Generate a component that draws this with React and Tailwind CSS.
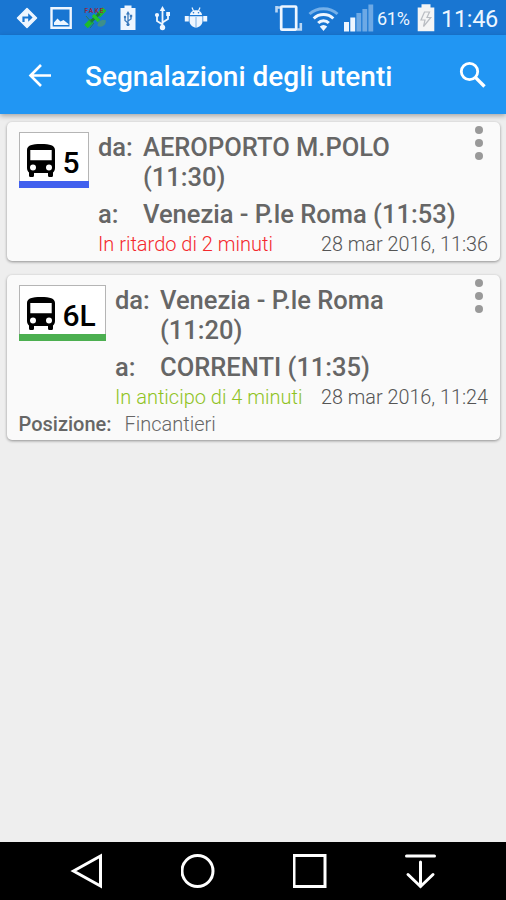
import clsx from 'clsx';

const reports = [
  {
    id: 1,
    line: '5',
    lineColor: 'bg-[#4160ee]',
    badgeWidth: 'w-[70px]',
    from: ['AEROPORTO M.POLO', '(11:30)'],
    to: 'Venezia - P.le Roma (11:53)',
    status: 'In ritardo di 2 minuti',
    statusColor: 'text-[#f4282d]',
    date: '28 mar 2016, 11:36',
  },
  {
    id: 2,
    line: '6L',
    lineColor: 'bg-[#4caf50]',
    badgeWidth: 'w-[87px]',
    from: ['Venezia - P.le Roma', '(11:20)'],
    to: 'CORRENTI (11:35)',
    status: 'In anticipo di 4 minuti',
    statusColor: 'text-[#8fc31f]',
    date: '28 mar 2016, 11:24',
    position: 'Fincantieri',
  },
];

function StatusBar() {
  return (
    <div className="flex h-[35px] shrink-0 items-center bg-[#1976d2] pl-4 pr-[9px] text-[#eef6ff]">
      {/* Notifications */}
      <svg className="h-[35px] w-[22px]" viewBox="0 0 22 35" fill="none">
        <path d="M11 8.5 20.5 18 11 27.5 1.5 18Z" fill="currentColor" stroke="currentColor" strokeWidth="1.5" strokeLinejoin="round" />
        <path d="M7.5 22V17.5H13.5" stroke="#1976d2" strokeWidth="2.2" />
        <path d="M12.2 13.2 16.6 17.5 12.2 21.8Z" fill="#1976d2" />
      </svg>
      <svg className="ml-[12px] h-[35px] w-[23px]" viewBox="0 0 23 35" fill="none">
        <path d="M1.5 8.3H20.7V27.7H1.5Z" stroke="currentColor" strokeWidth="2.4" />
        <path d="M4 25V22.5L7.5 18.5 10.5 21.5 13.5 20 18.5 24V25Z" fill="currentColor" />
      </svg>
      <svg className="ml-[11px] h-[35px] w-[24px]" viewBox="0 0 24 35" fill="none">
        <path d="M2 26.5 8 20.5M14.5 15.5 20.5 9" stroke="#1dbb2c" strokeWidth="5" />
        <path d="M7 21.5 15.5 13.5" stroke="#187e38" strokeWidth="3" />
        <path d="M9 15 15 21" stroke="#22c529" strokeWidth="3.5" />
        <path d="M13.5 26C13.5 21.5 17 19 22 20.5 22 25 18 28 13.5 26Z" fill="#3e8f8a" />
        <path d="M2 16 8 23M6 28 10 23" stroke="#267d58" strokeWidth="1" />
        <text x="0.5" y="13" fill="#8f2a45" fontFamily="Roboto, sans-serif" fontSize="6.5" fontWeight="700" textLength="19">FAKE</text>
      </svg>
      <svg className="ml-[11px] h-[35px] w-[18px]" viewBox="0 0 18 35" fill="none">
        <path d="M5.5 5.5H12.5V8H16.5V30H1.5V8H5.5Z" fill="currentColor" />
        <path d="M9 13V26M9 23 6 20.5V17M9 21 12 19V16" stroke="#3979bc" strokeWidth="1.3" />
        <circle cx="9" cy="24.5" r="1.6" fill="#3979bc" />
        <path d="M9 11 11 14.5H7ZM10.8 14.8H13.2V17.2H10.8Z" fill="#3979bc" />
        <circle cx="6" cy="17" r="1.2" fill="#3979bc" />
      </svg>
      <svg className="ml-[17px] h-[35px] w-[18px]" viewBox="0 0 18 35" fill="none">
        <path d="M8.5 10V28M8.5 24.5 3 21V15.5M8.5 22.5 14 19V14" stroke="currentColor" strokeWidth="1.8" />
        <path d="M8.5 6 11.3 11H5.7ZM12.2 12H16V16H12.2Z" fill="currentColor" />
        <circle cx="3" cy="15" r="2.1" fill="currentColor" />
        <circle cx="8.5" cy="27.5" r="2.7" fill="currentColor" />
      </svg>
      <svg className="ml-[12px] h-[35px] w-[24px]" viewBox="0 0 24 35" fill="none">
        <path d="M6 15C6 8.5 18 8.5 18 15ZM5.5 16.2H18.5V21C18.5 25 15 27.5 12 27.5S5.5 25 5.5 21Z" fill="currentColor" />
        <path d="M8 7.5 9.5 11M16 7.5 14.5 11" stroke="currentColor" strokeWidth="1.2" />
        <path d="M0.8 16H4.8V21.5H0.8ZM19.2 16H23.2V21.5H19.2Z" fill="currentColor" />
        <path d="M12 17V27" stroke="#6ba6e0" strokeWidth="0.9" />
        <circle cx="9.5" cy="12.8" r="0.8" fill="#1976d2" />
        <circle cx="14.5" cy="12.8" r="0.8" fill="#1976d2" />
      </svg>

      {/* System icons */}
      <svg className="ml-auto h-[35px] w-[30px]" viewBox="0 0 30 35" fill="none">
        <rect x="7.2" y="6.5" width="15" height="23.2" rx="0.8" stroke="currentColor" strokeWidth="2.7" />
        <path d="M2.5 6V12.5M2 7.5H6M26.8 23V29.5H23" stroke="#b9d6f4" strokeWidth="2.6" />
      </svg>
      <svg className="ml-1 h-[35px] w-[31px]" viewBox="0 0 31 35" fill="none" strokeWidth="3">
        <path d="M1.5 14C9 7 22 7 29.5 14" stroke="#75b0e9" />
        <path d="M5.7 18.5C11 13.3 20 13.3 25.3 18.5M10.2 23C13 20 18 20 20.8 23" stroke="currentColor" />
        <path d="M11.8 26.5Q15.5 23.5 19.2 26.5L15.5 31Z" fill="currentColor" />
      </svg>
      <svg className="ml-[5px] h-[35px] w-[30px]" viewBox="0 0 30 35">
        <path d="M0 22H5V31.5H0ZM6.3 17.5H11.2V31.5H6.3Z" fill="currentColor" />
        <path d="M12.4 13H17.2V31.5H12.4ZM18.4 9H23.2V31.5H18.4ZM24.4 4.5H29.2V31.5H24.4Z" fill="#6da9e5" />
      </svg>
      <span className="ml-[3px] w-[35px] whitespace-nowrap pt-[3px] text-[18px] leading-none tracking-[-0.3px]">61%</span>
      <svg className="ml-[5px] h-[35px] w-[18px]" viewBox="0 0 18 35" fill="none">
        <path d="M4.5 4.2H13.5V7.5H17.3V31.3H0.7V7.5H4.5Z" fill="#f4f5f5" />
        <path d="M7.5 12 4 20H8L6.5 26.5 13.8 17.5H10L12.5 12Z" stroke="#b9bdc2" strokeWidth="1.2" />
      </svg>
      <span className="ml-[6px] w-[56px] whitespace-nowrap pt-[4px] text-[23.5px] leading-none tracking-[-0.3px]">11:46</span>
    </div>
  );
}

function AppBar() {
  return (
    <header className="relative flex h-[79px] shrink-0 items-center bg-[#2196f3] pl-[27px] pr-[19px] text-white shadow-[0_2px_5px_rgba(0,0,0,0.3)]">
      <button aria-label="Indietro">
        <svg className="h-[26px] w-[26px]" viewBox="0 0 26 26" fill="none" stroke="currentColor" strokeWidth="2.6">
          <path d="M24 13.5H3.5M14 3 3.5 13.5 14 24" />
        </svg>
      </button>
      <h1 className="ml-8 whitespace-nowrap pt-[5px] text-[28px] font-medium leading-8">Segnalazioni degli utenti</h1>
      <button className="ml-auto" aria-label="Cerca">
        <svg className="h-[28px] w-[28px]" viewBox="0 0 28 28" fill="none" stroke="currentColor">
          <circle cx="10.5" cy="10.5" r="8.2" strokeWidth="2.8" />
          <path d="M16.4 16.4 25.5 25.5" strokeWidth="3.4" />
        </svg>
      </button>
    </header>
  );
}

function LineBadge({ line, color, width }) {
  return (
    <div className={clsx('flex h-[56px] shrink-0 flex-col border border-b-0 border-[#b5b5b5] bg-white text-black', width)}>
      <div className="flex flex-1 items-start pl-[6px] pt-[10px]">
        <svg className="h-[34px] w-[30px] shrink-0" viewBox="0 0 30 34">
          <path
            fillRule="evenodd"
            d="M1 7C1 2.5 6 1 15 1S29 2.5 29 7V25C29 27 28 28.5 27 29.5V32.5C27 35 22 35 22 32.5V30H8V32.5C8 35 3 35 3 32.5V29.5C2 28.5 1 27 1 25ZM4.3 7V17.3H25.7V7ZM7 21.5A3 3 0 1 0 7 27.5 3 3 0 1 0 7 21.5ZM23 21.5A3 3 0 1 0 23 27.5 3 3 0 1 0 23 21.5Z"
          />
        </svg>
        <span className="ml-[7px] mt-[3px] text-[30px] font-medium leading-[34px]">{line}</span>
      </div>
      <div className={clsx('-mx-px h-[7px]', color)} />
    </div>
  );
}

function ReportCard({ report }) {
  return (
    <article
      className={clsx(
        'flex flex-col rounded-[5px] bg-[#fafafa] pl-[11.5px] pr-[12px] pt-[10px] shadow-[0_1px_3px_rgba(0,0,0,0.4)]',
        report.position ? 'h-[165px]' : 'h-[139px]'
      )}
    >
      <div className="flex">
        <LineBadge line={report.line} color={report.lineColor} width={report.badgeWidth} />
        <div className="ml-[9.5px] flex-1">
          <div className="flex text-[25.5px] font-medium leading-[30px] text-[#666]">
            <span className="w-[45px] shrink-0">da:</span>
            <div className="whitespace-nowrap">
              {report.from.map((part) => (
                <div key={part}>{part}</div>
              ))}
            </div>
            <button className="-mt-[6px] -mr-px ml-auto flex w-[21px] flex-col items-center gap-[5px] self-start" aria-label="Altro">
              <i className="size-2 rounded-full bg-[#999]" />
              <i className="size-2 rounded-full bg-[#999]" />
              <i className="size-2 rounded-full bg-[#999]" />
            </button>
          </div>
          <div className="mt-[7px] flex whitespace-nowrap text-[25.5px] font-medium leading-[30px] text-[#666]">
            <span className="w-[45px] shrink-0">a:</span>
            <span>{report.to}</span>
          </div>
          <div className="mt-[2px] flex items-baseline justify-between whitespace-nowrap text-[20px] font-light leading-[26px]">
            <span className={report.statusColor}>{report.status}</span>
            <span className="text-[19.8px] text-[#555]">{report.date}</span>
          </div>
        </div>
      </div>
      {report.position && (
        <div className="flex gap-[13px] text-[20px] leading-[26px] text-[#666]">
          <span className="font-medium">Posizione:</span>
          <span className="font-light">{report.position}</span>
        </div>
      )}
    </article>
  );
}

function NavigationBar() {
  return (
    <nav className="flex h-[58px] shrink-0 items-center gap-[76px] bg-black pl-[69px] text-white">
      <svg className="h-[38px] w-[36px]" viewBox="0 0 36 38" fill="none" stroke="currentColor" strokeWidth="3">
        <path d="M4.5 19 31.5 4V34Z" />
      </svg>
      <svg className="h-[38px] w-[36px]" viewBox="0 0 36 38" fill="none" stroke="currentColor" strokeWidth="3">
        <circle cx="16.5" cy="19" r="15.5" />
      </svg>
      <svg className="h-[38px] w-[36px]" viewBox="0 0 36 38" fill="none" stroke="currentColor" strokeWidth="3">
        <rect x="1" y="3.5" width="31" height="31" />
      </svg>
      <svg className="h-[38px] w-[36px]" viewBox="0 0 36 38" fill="none" stroke="currentColor" strokeWidth="3">
        <path d="M1.5 4H29.5M15.5 10V34.5M3 22.5 15.5 34.5 28 22.5" strokeLinecap="round" />
      </svg>
    </nav>
  );
}

export default function App() {
  return (
    <div className="flex h-[900px] w-[506px] flex-col overflow-hidden bg-[#eee] font-[Roboto,sans-serif]">
      <StatusBar />
      <AppBar />
      <main className="flex flex-1 flex-col gap-[14px] pl-[7px] pr-[6px] pt-2">
        {reports.map((report) => (
          <ReportCard key={report.id} report={report} />
        ))}
      </main>
      <NavigationBar />
    </div>
  );
}
